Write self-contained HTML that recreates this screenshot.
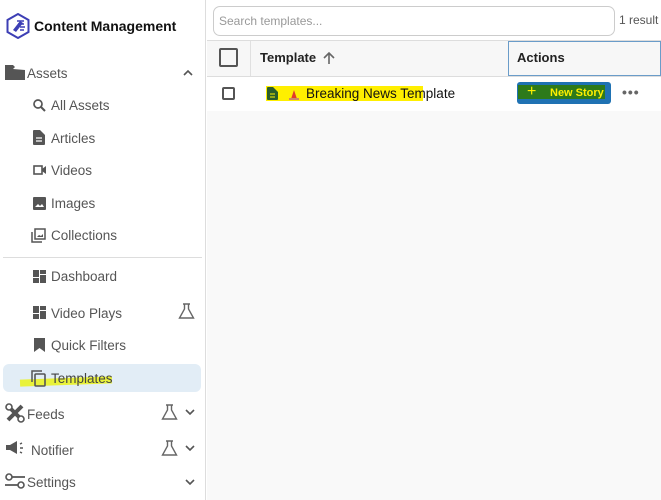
<!DOCTYPE html>
<html><head><style>
*{margin:0;padding:0;box-sizing:border-box}
body{width:661px;height:500px;overflow:hidden;font-family:"Liberation Sans",sans-serif;background:#fff;position:relative;color:#444}
.abs{position:absolute}
.sb{left:0;top:0;width:206px;height:500px;border-right:1px solid #ddd;background:#fff}
.it{position:absolute;font-size:13.5px;color:#555;white-space:nowrap}
.ic{position:absolute}
</style></head><body>
<div class="abs sb">
<svg class="ic" style="left:5px;top:13px" width="26" height="26" viewBox="0 0 26 26"><path d="M13 1L23.5 7V19L13 25L2.5 19V7Z" fill="none" stroke="#3d3fb5" stroke-width="2"/><path d="M8 17L15 8L18 10L11 19Z" fill="#3d3fb5"/><path d="M12 8h7M13 11h6M15 14h5M15 17h4" stroke="#3d3fb5" stroke-width="1.5"/></svg>
<div class="it" style="left:34px;top:18px;font-size:14px;font-weight:bold;color:#111">Content Management</div>
<svg class="ic" style="left:5px;top:65px" width="20" height="15"><path d="M0 0h8l3 3h9v12H0z" fill="#555"/><path d="M8 4l4-4h8v5z" fill="#fff"/></svg>
<div class="it" style="left:27px;top:66px">Assets</div>
<svg class="ic" style="left:183px;top:69px" width="10" height="7"><path d="M1 6l4-4 4 4" stroke="#555" fill="none" stroke-width="1.6"/></svg>
<svg class="ic" style="left:33px;top:99px" width="13" height="13"><circle cx="5" cy="5" r="4" fill="none" stroke="#555" stroke-width="1.7"/><path d="M8 8l4 4" stroke="#555" stroke-width="2"/></svg>
<div class="it" style="left:51px;top:98px">All Assets</div>
<svg class="ic" style="left:33px;top:130px" width="12" height="15"><path d="M0 1q0-1 1-1h6l5 5v9q0 1-1 1H1q-1 0-1-1z" fill="#555"/><path d="M3 8h6M3 11h6" stroke="#fff" stroke-width="1.2"/></svg>
<div class="it" style="left:51px;top:131px">Articles</div>
<svg class="ic" style="left:33px;top:165px" width="14" height="10"><rect x="1" y="1" width="8" height="8" fill="none" stroke="#555" stroke-width="1.6"/><path d="M9 4l4-3v8l-4-3z" fill="#555"/></svg>
<div class="it" style="left:51px;top:163px">Videos</div>
<svg class="ic" style="left:33px;top:197px" width="13" height="13"><rect width="13" height="13" rx="1" fill="#555"/><path d="M2 10l3-3 2 2 2-2 2 3z" fill="#fff"/></svg>
<div class="it" style="left:51px;top:196px">Images</div>
<svg class="ic" style="left:31px;top:228px" width="15" height="15"><path d="M1 4v10h10" stroke="#555" fill="none" stroke-width="1.5"/><rect x="4" y="1" width="10" height="10" fill="none" stroke="#555" stroke-width="1.5"/><path d="M6 9l2-2 2 1 2-2v3z" fill="#555"/></svg>
<div class="it" style="left:51px;top:228px">Collections</div>
<div class="abs" style="left:3px;top:257px;width:199px;height:1px;background:#ddd"></div>
<svg class="ic" style="left:33px;top:270px" width="13" height="13"><path d="M0 0h6v7H0zM7 0h6v4H7zM7 5h6v8H7zM0 8h6v5H0z" fill="#555"/></svg>
<div class="it" style="left:51px;top:269px">Dashboard</div>
<svg class="ic" style="left:33px;top:306px" width="13" height="13"><path d="M0 0h6v7H0zM7 0h6v4H7zM7 5h6v8H7zM0 8h6v5H0z" fill="#555"/></svg>
<div class="it" style="left:51px;top:306px">Video Plays</div>
<svg class="ic" style="left:178px;top:303px" width="17" height="16"><path d="M5 1h7M6.5 1v5L1.5 15h14L10.5 6V1" stroke="#666" fill="none" stroke-width="1.4"/></svg>
<svg class="ic" style="left:34px;top:338px" width="11" height="14"><path d="M0 0h11v14L5.5 10 0 14z" fill="#555"/></svg>
<div class="it" style="left:51px;top:338px">Quick Filters</div>
<div class="abs" style="left:3px;top:364px;width:198px;height:28px;background:#e2edf6;border-radius:6px"></div>
<div class="abs" style="left:20px;top:378px;width:92px;height:7px;background:#e9f23a;transform:rotate(-2deg)"></div>
<svg class="ic" style="left:31px;top:370px" width="16" height="17"><path d="M1 12V1h10" stroke="#555" fill="none" stroke-width="1.5"/><rect x="4" y="4" width="10" height="12" rx="1" fill="none" stroke="#555" stroke-width="1.6"/></svg>
<div class="it" style="left:51px;top:371px;color:#444">Templates</div>
<svg class="ic" style="left:5px;top:403px" width="20" height="20"><path d="M3 3l14 14M17 3L3 17" stroke="#555" stroke-width="4"/><circle cx="4" cy="4" r="3" fill="#fff" stroke="#555" stroke-width="1.6"/><circle cx="16" cy="16" r="3" fill="#fff" stroke="#555" stroke-width="1.6"/></svg>
<div class="it" style="left:27px;top:407px">Feeds</div>
<svg class="ic" style="left:161px;top:404px" width="17" height="16"><path d="M5 1h7M6.5 1v5L1.5 15h14L10.5 6V1" stroke="#666" fill="none" stroke-width="1.4"/></svg>
<svg class="ic" style="left:185px;top:409px" width="10" height="7"><path d="M1 1l4 4 4-4" stroke="#555" fill="none" stroke-width="1.6"/></svg>
<svg class="ic" style="left:6px;top:441px" width="22" height="14"><path d="M0 4h4l7-4v13l-7-4H0z" fill="#555"/><path d="M14 3l2-1M14 7h3M14 11l2 1" stroke="#555" stroke-width="1.5"/></svg>
<div class="it" style="left:31px;top:443px">Notifier</div>
<svg class="ic" style="left:161px;top:440px" width="17" height="16"><path d="M5 1h7M6.5 1v5L1.5 15h14L10.5 6V1" stroke="#666" fill="none" stroke-width="1.4"/></svg>
<svg class="ic" style="left:185px;top:445px" width="10" height="7"><path d="M1 1l4 4 4-4" stroke="#555" fill="none" stroke-width="1.6"/></svg>
<svg class="ic" style="left:5px;top:473px" width="20" height="16"><circle cx="4" cy="4" r="3" fill="none" stroke="#555" stroke-width="1.6"/><path d="M7 4h13M0 12h13" stroke="#555" stroke-width="1.8"/><circle cx="16" cy="12" r="3" fill="none" stroke="#555" stroke-width="1.6"/></svg>
<div class="it" style="left:27px;top:475px">Settings</div>
<svg class="ic" style="left:185px;top:479px" width="10" height="7"><path d="M1 1l4 4 4-4" stroke="#555" fill="none" stroke-width="1.6"/></svg>
</div>
<div class="abs" style="left:207px;top:0;width:454px;height:500px;background:#f9f9f9"></div>
<div class="abs" style="left:207px;top:0;width:454px;height:40px;background:#fff"></div>
<div class="abs" style="left:213px;top:6px;width:402px;height:30px;border:1px solid #ccc;border-radius:7px;background:#fff;font-size:12px;color:#999;padding:7px 5px">Search templates...</div>
<div class="abs" style="left:619px;top:13px;font-size:12px;color:#555">1 result</div>
<div class="abs" style="left:207px;top:40px;width:454px;height:37px;background:#f7f7f7;border-top:1px solid #ddd;border-bottom:1px solid #ddd"></div>
<div class="abs" style="left:250px;top:41px;width:1px;height:35px;background:#e0e0e0"></div>
<div class="abs" style="left:508px;top:41px;width:153px;height:35px;border:1px solid #6a9cc9;background:#f7f7f7"></div>
<div class="abs" style="left:219px;top:48px;width:19px;height:19px;border:2px solid #555;border-radius:2px"></div>
<div class="abs" style="left:260px;top:50px;font-size:13px;font-weight:bold;color:#222">Template</div>
<svg class="abs" style="left:322px;top:51px" width="14" height="14"><path d="M7 13V2M2 7l5-5 5 5" stroke="#666" fill="none" stroke-width="1.6"/></svg>
<div class="abs" style="left:517px;top:50px;font-size:13px;font-weight:bold;color:#222">Actions</div>
<div class="abs" style="left:207px;top:77px;width:454px;height:34px;background:#fff"></div>
<div class="abs" style="left:222px;top:87px;width:13px;height:13px;border:2px solid #555;border-radius:2px"></div>
<div class="abs" style="left:266px;top:86px;width:157px;height:15px;background:#ffef00"></div>
<svg class="abs" style="left:267px;top:87px" width="11" height="13"><path d="M0 1q0-1 1-1h5l5 5v7q0 1-1 1H1q-1 0-1-1z" fill="#2b5c2b"/><path d="M3 7h5M3 10h5" stroke="#ffef00" stroke-width="1"/></svg>
<svg class="abs" style="left:288px;top:88px" width="12" height="12"><path d="M3 11L6 2l3 9z" fill="#e23b2a"/><rect x="1" y="10" width="10" height="2" fill="#c86"/></svg>
<div class="abs" style="left:306px;top:86px;font-size:13.5px;color:#111">Breaking News Template</div>
<div class="abs" style="left:517px;top:82px;width:94px;height:22px;background:#1f72b3;border-radius:3px"></div>
<div class="abs" style="left:518px;top:85px;width:87px;height:14px;background:#2d7a1a"></div>
<div class="abs" style="left:527px;top:83px;font-size:16px;color:#ffef00">+</div>
<div class="abs" style="left:550px;top:87px;font-size:11px;color:#ffef00;font-weight:bold">New Story</div>
<div class="abs" style="left:622px;top:84px;font-size:14px;color:#666;letter-spacing:1px;font-weight:bold">•••</div>
</body></html>
